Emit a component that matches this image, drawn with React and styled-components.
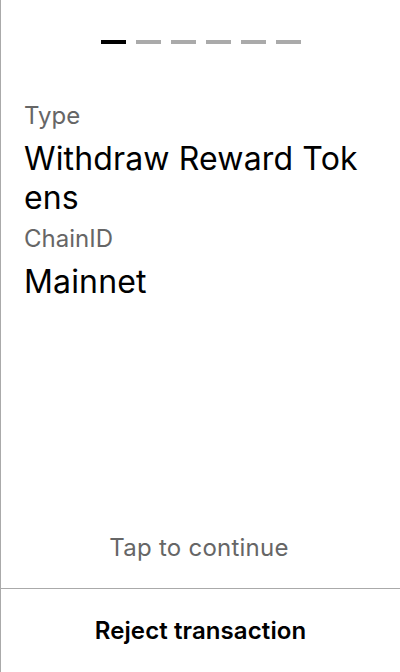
import React from "react";
import styled, { createGlobalStyle } from "styled-components";

const Global = createGlobalStyle`
  html, body { margin: 0; padding: 0; background: #fff; }
  body { font-family: Inter, "Noto Sans", sans-serif; -webkit-font-smoothing: antialiased; }
  #root { height: 672px; }
`;

const Screen = styled.div`
  width: 400px;
  height: 672px;
  box-sizing: border-box;
  border-left: 1px solid #aaaaaa;
  display: flex;
  flex-direction: column;
  background: #fff;
`;

const Progress = styled.div`
  display: flex;
  justify-content: center;
  gap: 10px;
  padding-top: 40px;
`;

const Segment = styled.div`
  width: 25px;
  height: 4px;
  background: ${(p) => (p.$active ? "#000000" : "#aaaaaa")};
`;

const Body = styled.div`
  flex: 1;
  display: flex;
  flex-direction: column;
  gap: 7px;
  padding: 57px 26px 0 23px;
`;

const Field = styled.div`
  display: flex;
  flex-direction: column;
  gap: 9px;
`;

const Label = styled.div`
  font-size: 24px;
  line-height: normal;
  color: #666666;
`;

const Value = styled.div`
  font-size: 32px;
  line-height: normal;
  letter-spacing: 0.15px;
  color: #000000;
  word-break: break-all;
`;

const Hint = styled.div`
  margin-top: auto;
  text-align: center;
  font-size: 24px;
  line-height: normal;
  letter-spacing: 0.25px;
  color: #666666;
  padding-bottom: 26px;
`;

const RejectButton = styled.button`
  all: unset;
  box-sizing: border-box;
  height: 84px;
  border-top: 1px solid #aaaaaa;
  display: flex;
  align-items: center;
  justify-content: center;
  font-family: Inter, "Noto Sans", sans-serif;
  font-size: 24px;
  font-weight: 600;
  letter-spacing: 0.1px;
  color: #000;
`;

export default function App() {
  const steps = [true, false, false, false, false, false];
  return (
    <>
      <Global />
      <Screen>
        <Progress>
          {steps.map((a, i) => (
            <Segment key={i} $active={a} />
          ))}
        </Progress>
        <Body>
          <Field>
            <Label>Type</Label>
            <Value>Withdraw Reward Tokens</Value>
          </Field>
          <Field>
            <Label>ChainID</Label>
            <Value>Mainnet</Value>
          </Field>
          <Hint>Tap to continue</Hint>
        </Body>
        <RejectButton>Reject transaction</RejectButton>
      </Screen>
    </>
  );
}
